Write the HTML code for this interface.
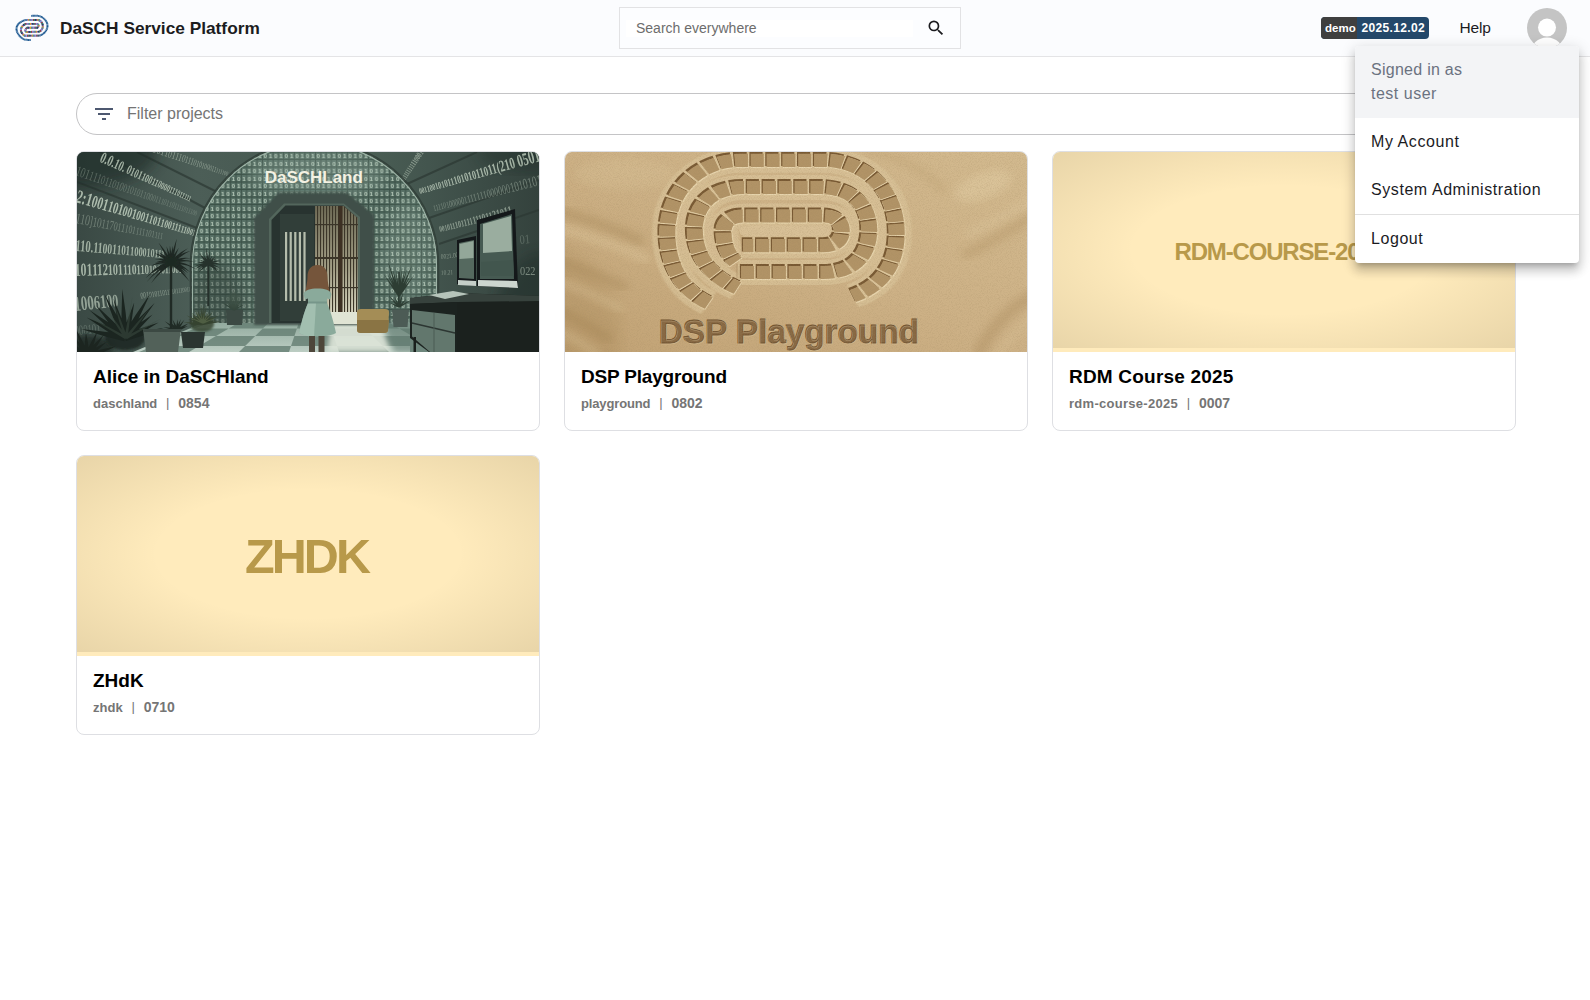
<!DOCTYPE html>
<html lang="en">
<head>
<meta charset="utf-8">
<title>DaSCH Service Platform</title>
<style>
*{box-sizing:border-box;margin:0;padding:0}
html,body{width:1590px;height:1000px;overflow:hidden;background:#fff;font-family:"Liberation Sans",sans-serif;color:#1b1b1f}
.abs{position:absolute}
#hdr{position:absolute;left:0;top:0;width:1590px;height:57px;background:#fbfcfe;border-bottom:1px solid #e4e4e6}
#title{position:absolute;left:60px;top:16.500px;font-size:17.3px;line-height:22px;font-weight:bold;color:#1c1c1e;white-space:nowrap;letter-spacing:0}
#search{position:absolute;left:619px;top:7px;width:342px;height:42px;border:1px solid #e2e2e4;background:#fcfdff}
#search .inp{position:absolute;left:6px;top:12px;width:287px;height:17px;background:#fff}
#search .ph{position:absolute;left:16px;top:12px;font-size:14px;line-height:17px;color:#6d6d6d;white-space:nowrap}
#badge{position:absolute;left:1321px;top:17px;width:108px;height:22px;border-radius:4px;overflow:hidden;background:#24486a;color:#fff;font-weight:bold;font-size:12px;line-height:22px;white-space:nowrap}
#badge .d{position:absolute;left:0;top:0;width:36px;height:22px;background:#3f3f3f;padding-left:4px;font-size:11.500px}
#badge .v{position:absolute;left:36px;top:0;width:72px;height:22px;padding-left:4.600px;letter-spacing:.33px}
#help{position:absolute;left:1459.500px;top:16.500px;font-size:15.500px;letter-spacing:-.15px;line-height:22px;color:#1b1b1f;white-space:nowrap}
#avatar{position:absolute;left:1527px;top:8px;width:40px;height:40px;border-radius:50%;background:#c4c4c4;overflow:hidden}
#filter{position:absolute;left:76px;top:93px;width:1440px;height:42px;border:1px solid #c4c4c6;border-radius:21px;background:#fff}
#filter .ph{position:absolute;left:50px;top:10px;font-size:16px;line-height:20px;color:#747474;white-space:nowrap}
.card{position:absolute;width:464px;height:280px;border:1px solid #dedfe3;border-radius:8px;background:#fff;overflow:hidden}
.card .img{position:absolute;left:0;top:0;width:462px;height:200px;overflow:hidden}
.card .t{position:absolute;left:16px;top:212.500px;font-size:19px;line-height:24px;font-weight:bold;color:#000;white-space:nowrap}
.card .s{position:absolute;left:16px;top:243px;font-size:14px;line-height:16px;font-weight:bold;color:#757575;white-space:nowrap}
.card .s b{font-size:13px}
.card .s i{display:inline-block;width:21px;text-align:center;font-style:normal;font-weight:normal;font-size:13px;position:relative;top:-1px}
.ph-img{background:#ffebbc;}
.ph-img .vig{position:absolute;left:0;top:0;width:462px;height:196px;background:radial-gradient(ellipse farthest-corner at center,rgba(0,0,0,0) 46%,rgba(40,25,0,.105) 100%)}
.ph-img .lbl{position:absolute;left:0;top:0;width:462px;height:200px;text-align:center;font-weight:bold;color:#b8994a;white-space:nowrap}
#menu{position:absolute;left:1355px;top:46px;width:224px;height:217px;background:#fff;border-radius:4px;overflow:hidden;box-shadow:0 5px 5px -3px rgba(0,0,0,.2),0 8px 10px 1px rgba(0,0,0,.14),0 3px 14px 2px rgba(0,0,0,.12)}
#menu .hd{position:absolute;left:0;top:0;width:224px;height:72px;background:#f3f4f6;color:#6b7280;padding:12px 16px;font-size:16px;line-height:24px;letter-spacing:.5px}
#menu .it{position:absolute;left:0;width:224px;height:48px;padding:0 16px;font-size:16px;line-height:48px;color:#1b1b1f;letter-spacing:.57px;white-space:nowrap}
#menu .dv{position:absolute;left:0;top:168px;width:224px;height:1px;background:#e0e0e0}
</style>
</head>
<body>
<div id="hdr">
  <svg id="logo" class="abs" style="left:12px;top:10px" width="40" height="36" viewBox="0 0 40 36" fill="none" stroke-linecap="butt">
<g stroke="#1b5790" stroke-width="2" stroke-dasharray="1.1 .25">
<path d="M19.3,5.9 C24,5.5 28,5.6 30.5,7.5 C34,10 35.8,13.5 35.5,16.2 C35.2,19.5 33.5,22 31.5,23.5 C30,24.8 28.5,25.4 27.4,25.6"/>
<path d="M18.7,29.9 C15,30.1 12.500,29.800 10.500,28.500 C7,26 4.300,22 4.500,18.700 C4.700,15.500 6.500,13.500 9,11.900 C11,10.600 13,10 15.100,9.900"/>
</g>
<g stroke-width="1.9">
<defs><path id="lsp" d="M15.1,9.9 L26.600,10 C28.500,10.600 30,12.500 30.600,14.400 C31,16 30.800,17.500 30.300,18.700 C29.500,20.300 28.500,21.200 27.400,21.600 L14.400,22 C13.500,21.500 13.200,20.800 13.300,20.200 C13.600,19 14.300,18.300 15.100,17.800 L25.200,17.800 C26.200,17.300 26.600,16.500 26.600,15.500 C26.500,14.700 26,14.200 25.200,13.900 L13.700,13.900 C11.500,14.800 9.600,16.800 9,18.700 C8.600,20.200 9,21.500 9.700,22.700 C10.500,24 11.500,25 12.600,25.700 L27.400,25.600"/></defs>
<use href="#lsp" stroke="#7b5ea7"/>
<use href="#lsp" stroke="#f0a020" stroke-dasharray="1.15 8.05" stroke-dashoffset="-1.15"/>
<use href="#lsp" stroke="#35a585" stroke-dasharray="1.15 8.05" stroke-dashoffset="-2.30"/>
<use href="#lsp" stroke="#8a6cb5" stroke-dasharray="1.15 8.05" stroke-dashoffset="-3.45"/>
<use href="#lsp" stroke="#7fb0e0" stroke-dasharray="1.15 8.05" stroke-dashoffset="-4.60"/>
<use href="#lsp" stroke="#a83240" stroke-dasharray="1.15 8.05" stroke-dashoffset="-5.75"/>
<use href="#lsp" stroke="#2a8a6a" stroke-dasharray="1.15 8.05" stroke-dashoffset="-6.90"/>
<use href="#lsp" stroke="#1f3a55" stroke-dasharray="1.15 8.05" stroke-dashoffset="-8.05"/>
</g>
</svg>
  <div id="title">DaSCH Service Platform</div>
  <div id="search"><div class="inp"></div><div class="ph">Search everywhere</div>
    <svg class="abs" style="left:306px;top:10px" width="20" height="20" viewBox="0 0 24 24"><path fill="#1b1b1f" d="M15.5 14h-.79l-.28-.27A6.471 6.471 0 0 0 16 9.5 6.5 6.5 0 1 0 9.500 16c1.610 0 3.090-.590 4.230-1.570l.27.280v.790l5 4.990L20.490 19l-4.990-5zm-6 0C7.010 14 5 11.990 5 9.500S7.010 5 9.500 5 14 7.010 14 9.500 11.990 14 9.500 14z"/></svg>
  </div>
  <div id="badge"><div class="d">demo</div><div class="v">2025.12.02</div></div>
  <div id="help">Help</div>
  <div id="avatar"><svg width="40" height="40" viewBox="0 0 40 40"><circle cx="20" cy="19.600" r="9" fill="#fff"/><ellipse cx="20" cy="45.200" rx="16.500" ry="15.700" fill="#fff"/></svg></div>
</div>

<div id="filter">
  <svg class="abs" style="left:15px;top:8px" width="24" height="24" viewBox="0 0 24 24"><path fill="#4d5870" d="M10 18h4v-2h-4v2zM3 6v2h18V6H3zm3 7h12v-2H6v2z"/></svg>
  <div class="ph">Filter projects</div>
</div>

<div class="card" style="left:76px;top:151px">
  <div class="img" id="img1"><svg width="462" height="200" viewBox="0 0 462 200" style="display:block" font-family="'Liberation Serif',serif">
<defs>
<linearGradient id="lw" x1="0" y1="0" x2="1" y2="0"><stop offset="0" stop-color="#3a4944"/><stop offset=".5" stop-color="#4c5e57"/><stop offset="1" stop-color="#465850"/></linearGradient>
<linearGradient id="rw" x1="0" y1="0" x2="1" y2="0"><stop offset="0" stop-color="#50655a"/><stop offset=".5" stop-color="#43554e"/><stop offset="1" stop-color="#34423d"/></linearGradient>
<linearGradient id="fl" x1="0" y1="0" x2="0" y2="1"><stop offset="0" stop-color="#93ab9f"/><stop offset="1" stop-color="#bccdc3"/></linearGradient>
<linearGradient id="win" x1="0" y1="0" x2="0" y2="1"><stop offset="0" stop-color="#6f6b56"/><stop offset=".6" stop-color="#a5a188"/><stop offset="1" stop-color="#d8d6c0"/></linearGradient>
<pattern id="grid" width="10.600" height="15" patternUnits="userSpaceOnUse"><rect width="10.600" height="15" fill="#3d5349"/><g fill="#597267"><rect x=".5" y=".6" width="4.300" height="6.300"/><rect x="5.800" y=".6" width="4.300" height="6.300"/><rect x=".5" y="8.100" width="4.300" height="6.300"/><rect x="5.800" y="8.100" width="4.300" height="6.300"/></g><g fill="#b3c6b6" font-family="'Liberation Sans',sans-serif" font-weight="bold" font-size="6.200" text-anchor="middle"><text x="2.650" y="6">1</text><text x="7.950" y="6">0</text><text x="2.650" y="13.500">0</text><text x="7.950" y="13.500">1</text></g></pattern>
<pattern id="bars" width="3" height="10" patternUnits="userSpaceOnUse"><rect x="0" y="0" width="1.100" height="10" fill="#3b3528"/></pattern>
<filter id="b1"><feGaussianBlur stdDeviation="1"/></filter>
<filter id="b2"><feGaussianBlur stdDeviation="2.500"/></filter>
<filter id="b6"><feGaussianBlur stdDeviation="7"/></filter>
<clipPath id="endc"><path d="M114,200 L114,113 A123.500,123.500 0 0 1 361,113 L361,200 Z"/></clipPath>
</defs>
<rect width="462" height="200" fill="#3a4944"/>
<rect x="0" y="0" width="240" height="200" fill="url(#lw)"/>
<rect x="240" y="0" width="222" height="200" fill="url(#rw)"/>
<path d="M0,30 L120,76" stroke="#2c3833" stroke-width="2" opacity=".7"/>
<path d="M60,0 L140,40" stroke="#2c3833" stroke-width="2" opacity=".7"/>
<path d="M0,-12 L128,56" stroke="#2c3833" stroke-width="2" opacity=".7"/>
<path d="M352,66 L462,28" stroke="#2c3833" stroke-width="2" opacity=".7"/>
<path d="M362,92 L462,58" stroke="#2c3833" stroke-width="2" opacity=".7"/>
<path d="M330,32 L400,0" stroke="#2c3833" stroke-width="2" opacity=".7"/>
<ellipse cx="0" cy="0" rx="80" ry="36" fill="#1f2925" opacity=".6" filter="url(#b6)"/>
<ellipse cx="470" cy="160" rx="50" ry="60" fill="#1f2925" opacity=".45" filter="url(#b6)"/>
<ellipse cx="462" cy="0" rx="60" ry="20" fill="#1f2925" opacity=".35" filter="url(#b6)"/>
<text fill="#b9c8b8" font-weight="normal" opacity="0.6" transform="translate(75 0) rotate(17.7) scale(0.64 1)"><tspan font-size="12.9">101</tspan><tspan font-size="11.8">101</tspan><tspan font-size="10.8">110</tspan><tspan font-size="9.9">111</tspan><tspan font-size="9.1">010</tspan><tspan font-size="8.3">100</tspan><tspan font-size="7.7">011</tspan><tspan font-size="7.0">111</tspan><tspan font-size="6.4">100</tspan></text>
<text fill="#b9c8b8" font-weight="bold" opacity="0.85" transform="translate(22 9.5) rotate(23.7) scale(0.64 1)"><tspan font-size="15.9">0.0</tspan><tspan font-size="14.7">.10</tspan><tspan font-size="13.6">. 0</tspan><tspan font-size="12.6">101</tspan><tspan font-size="11.7">100</tspan><tspan font-size="10.8">110</tspan><tspan font-size="10.0">000</tspan><tspan font-size="9.3">111</tspan><tspan font-size="8.6">011</tspan><tspan font-size="8.0">111</tspan></text>
<text fill="#b9c8b8" font-weight="normal" opacity="0.33" transform="translate(-2 23) rotate(18.6) scale(0.64 1)"><tspan font-size="14.4">101</tspan><tspan font-size="13.6">111</tspan><tspan font-size="12.8">011</tspan><tspan font-size="12.1">010</tspan><tspan font-size="11.4">010</tspan><tspan font-size="10.8">101</tspan><tspan font-size="10.2">100</tspan><tspan font-size="9.6">011</tspan><tspan font-size="9.0">101</tspan><tspan font-size="8.5">101</tspan><tspan font-size="8.0">111</tspan><tspan font-size="7.6">011</tspan><tspan font-size="7.2">100</tspan></text>
<text fill="#b9c8b8" font-weight="bold" opacity="0.9" transform="translate(-2 50) rotate(15.9) scale(0.64 1)"><tspan font-size="18.9">2:1</tspan><tspan font-size="17.5">001</tspan><tspan font-size="16.2">101</tspan><tspan font-size="14.9">001</tspan><tspan font-size="13.8">001</tspan><tspan font-size="12.7">101</tspan><tspan font-size="11.8">100</tspan><tspan font-size="10.9">111</tspan><tspan font-size="10.0">110</tspan><tspan font-size="9.3">011</tspan></text>
<text fill="#b9c8b8" font-weight="normal" opacity="0.4" transform="translate(-2 71) rotate(10.5) scale(0.64 1)"><tspan font-size="15.2">110</tspan><tspan font-size="14.1">]10</tspan><tspan font-size="13.2">117</tspan><tspan font-size="12.3">011</tspan><tspan font-size="11.5">101</tspan><tspan font-size="10.7">111</tspan><tspan font-size="10.0">101</tspan><tspan font-size="9.4">111</tspan></text>
<text fill="#b9c8b8" font-weight="bold" opacity="0.8" transform="translate(-2 99) rotate(4.5) scale(0.64 1)"><tspan font-size="16.7">110</tspan><tspan font-size="15.7">.11</tspan><tspan font-size="14.8">001</tspan><tspan font-size="13.9">101</tspan><tspan font-size="13.1">100</tspan><tspan font-size="12.4">010</tspan><tspan font-size="11.7">111</tspan></text>
<text fill="#b9c8b8" font-weight="bold" opacity="0.85" transform="translate(-2 124) rotate(-1.7) scale(0.64 1)"><tspan font-size="18.2">101</tspan><tspan font-size="16.9">112</tspan><tspan font-size="15.7">101</tspan><tspan font-size="14.6">110</tspan><tspan font-size="13.5">110</tspan><tspan font-size="12.6">101</tspan><tspan font-size="11.7">011</tspan><tspan font-size="10.8">001</tspan></text>
<text fill="#b9c8b8" font-weight="bold" opacity="0.7" transform="translate(-2 159) rotate(-6.0) scale(0.64 1)"><tspan font-size="20.5">100</tspan><tspan font-size="19.3">610</tspan><tspan font-size="18.2">0</tspan></text>
<text fill="#b9c8b8" font-weight="normal" opacity="0.6" transform="translate(64 147) rotate(-9.3) scale(0.64 1)"><tspan font-size="9.1">001</tspan><tspan font-size="8.6">010</tspan><tspan font-size="8.1">110</tspan><tspan font-size="7.6">111</tspan><tspan font-size="7.1">101</tspan><tspan font-size="6.7">110</tspan><tspan font-size="6.3">011</tspan></text>
<text fill="#b9c8b8" font-weight="normal" opacity="0.28" transform="translate(-2 183) rotate(-4.8) scale(0.64 1)"><tspan font-size="13.6">000</tspan><tspan font-size="13.6">101</tspan></text>
<text fill="#b9c8b8" font-weight="bold" opacity="0.85" transform="translate(343 42) rotate(-15.3) scale(0.64 1)"><tspan font-size="8.3">001</tspan><tspan font-size="9.1">100</tspan><tspan font-size="9.8">101</tspan><tspan font-size="10.7">011</tspan><tspan font-size="11.6">101</tspan><tspan font-size="12.6">010</tspan><tspan font-size="13.7">110</tspan><tspan font-size="14.9">11(</tspan><tspan font-size="16.2">210</tspan><tspan font-size="17.7"> 05</tspan><tspan font-size="19.2">01</tspan></text>
<text fill="#b9c8b8" font-weight="normal" opacity="0.45" transform="translate(357 59) rotate(-13.7) scale(0.64 1)"><tspan font-size="8.3">111</tspan><tspan font-size="8.9">101</tspan><tspan font-size="9.5">000</tspan><tspan font-size="10.1">001</tspan><tspan font-size="10.8">111</tspan><tspan font-size="11.5">111</tspan><tspan font-size="12.2">000</tspan><tspan font-size="13.0">000</tspan><tspan font-size="13.9">101</tspan><tspan font-size="14.8">010</tspan><tspan font-size="15.8">111</tspan></text>
<text fill="#b9c8b8" font-weight="bold" opacity="0.62" transform="translate(363 80) rotate(-13.4) scale(0.64 1)"><tspan font-size="8.3">001</tspan><tspan font-size="8.9">011</tspan><tspan font-size="9.5">101</tspan><tspan font-size="10.2">111</tspan><tspan font-size="10.9">111</tspan><tspan font-size="11.7">011</tspan><tspan font-size="12.5">210</tspan><tspan font-size="13.4">11</tspan></text>
<text fill="#b9c8b8" font-weight="bold" opacity="0.62" transform="translate(327 30) rotate(-55.8) scale(0.64 1)"><tspan font-size="6.8">111</tspan><tspan font-size="7.3">111</tspan><tspan font-size="7.7">111</tspan><tspan font-size="8.2">110</tspan><tspan font-size="8.8">001</tspan></text>
<text fill="#b9c8b8" font-weight="normal" opacity="0.55" transform="translate(443 123) rotate(0.0) scale(0.8 1)"><tspan font-size="12.9">022</tspan></text>
<text fill="#b9c8b8" font-weight="normal" opacity="0.28" transform="translate(443 92) rotate(-5.7) scale(0.8 1)"><tspan font-size="12.9">01</tspan></text>
<text fill="#b9c8b8" font-weight="normal" opacity="0.55" transform="translate(364 107) rotate(-6.3) scale(0.8 1)"><tspan font-size="6.8">002</tspan><tspan font-size="6.8">1.0</tspan><tspan font-size="6.8">0</tspan></text>
<text fill="#b9c8b8" font-weight="normal" opacity="0.5" transform="translate(364 123) rotate(-3.2) scale(0.8 1)"><tspan font-size="6.8">10.</tspan><tspan font-size="6.8">21</tspan></text>
<g clip-path="url(#endc)"><rect x="100" y="-12" width="270" height="212" fill="url(#grid)"/>
<ellipse cx="140" cy="160" rx="30" ry="50" fill="#2d3b36" opacity=".4" filter="url(#b6)"/>
<ellipse cx="240" cy="22" rx="70" ry="22" fill="#a9c0b3" opacity=".25" filter="url(#b6)"/>
<ellipse cx="330" cy="100" rx="26" ry="50" fill="#a9c0b3" opacity=".18" filter="url(#b6)"/>
</g>
<path d="M114,172 L114,113 A123.500,123.500 0 0 1 361,113 L361,150" fill="none" stroke="#2f3d37" stroke-width="2.600" opacity=".8"/>
<path d="M115.500,172 L115.500,113 A122,122 0 0 1 359.500,113 L359.500,150" fill="none" stroke="#9db3a6" stroke-width="1.100"/>
<path d="M56,200 L126,171 L340,171 L340,200 Z" fill="url(#fl)"/>
<clipPath id="flc"><path d="M56,200 L126,171 L340,171 L340,200 Z"/></clipPath><g clip-path="url(#flc)">
<path d="M100.2,171 L130.6,171 L117.6,176.5 L83.5,176.5 Z" fill="#647d72" opacity=".8"/>
<path d="M161.0,171 L191.4,171 L185.8,176.5 L151.7,176.5 Z" fill="#647d72" opacity=".8"/>
<path d="M221.8,171 L252.2,171 L254.1,176.5 L219.9,176.5 Z" fill="#647d72" opacity=".8"/>
<path d="M282.6,171 L313.0,171 L322.3,176.5 L288.2,176.5 Z" fill="#647d72" opacity=".8"/>
<path d="M343.4,171 L373.8,171 L390.5,176.5 L356.4,176.5 Z" fill="#647d72" opacity=".8"/>
<path d="M49.3,176.5 L83.5,176.5 L60.6,184 L21.5,184 Z" fill="#647d72" opacity=".8"/>
<path d="M117.6,176.5 L151.7,176.5 L139.0,184 L99.8,184 Z" fill="#647d72" opacity=".8"/>
<path d="M185.8,176.5 L219.9,176.5 L217.4,184 L178.2,184 Z" fill="#647d72" opacity=".8"/>
<path d="M254.1,176.5 L288.2,176.5 L295.8,184 L256.6,184 Z" fill="#647d72" opacity=".8"/>
<path d="M322.3,176.5 L356.4,176.5 L374.2,184 L335.0,184 Z" fill="#647d72" opacity=".8"/>
<path d="M60.6,184 L99.8,184 L76.2,194 L30.2,194 Z" fill="#647d72" opacity=".8"/>
<path d="M139.0,184 L178.2,184 L168.1,194 L122.1,194 Z" fill="#647d72" opacity=".8"/>
<path d="M217.4,184 L256.6,184 L260.0,194 L214.0,194 Z" fill="#647d72" opacity=".8"/>
<path d="M295.8,184 L335.0,184 L351.9,194 L305.9,194 Z" fill="#647d72" opacity=".8"/>
<path d="M374.2,184 L413.4,184 L443.8,194 L397.8,194 Z" fill="#647d72" opacity=".8"/>
<path d="M-15.7,194 L30.2,194 L-12.3,208 L-67.7,208 Z" fill="#647d72" opacity=".8"/>
<path d="M76.2,194 L122.1,194 L98.5,208 L43.1,208 Z" fill="#647d72" opacity=".8"/>
<path d="M168.1,194 L214.0,194 L209.3,208 L153.9,208 Z" fill="#647d72" opacity=".8"/>
<path d="M260.0,194 L305.9,194 L320.1,208 L264.7,208 Z" fill="#647d72" opacity=".8"/>
<path d="M351.9,194 L397.8,194 L430.9,208 L375.5,208 Z" fill="#647d72" opacity=".8"/>
</g>
<path d="M256,162 L300,163 L314,200 L250,200 Z" fill="#dfe6da" opacity=".9" filter="url(#b2)"/>
<path d="M306,168 L342,168 L342,200 L318,200 Z" fill="#5f786e" opacity=".55" filter="url(#b2)"/>
<path d="M178,172 L178,66 L202,41.500 L269,41.500 L296,63 L296,172 Z" fill="#3f5048" stroke="#3f5048" stroke-width="2" stroke-linejoin="round" filter="url(#b1)"/><path d="M192,171 L192,67 L207,51.500 L267,51.500 L283,65 L283,171 Z" fill="#53665c"/>
<path d="M194.500,171 L194.500,68 L208.500,53.500 L266.500,53.500 L280.700,66 L280.700,171 Z" fill="#283330"/>
<rect x="203" y="62" width="34" height="107" fill="#313e39"/>
<rect x="208.0" y="80" width="2.200" height="69" fill="#b5bdac"/>
<rect x="212.6" y="80" width="2.200" height="69" fill="#b5bdac"/>
<rect x="217.2" y="80" width="2.200" height="69" fill="#b5bdac"/>
<rect x="221.8" y="80" width="2.200" height="69" fill="#b5bdac"/>
<rect x="226.4" y="80" width="2.200" height="69" fill="#b5bdac"/>
<path d="M238,54 L266.500,54 L280.700,66 L280.700,162 L238,162 Z" fill="url(#win)"/>
<path d="M238,54 L266.500,54 L280.700,66 L280.700,162 L238,162 Z" fill="url(#bars)"/>
<rect x="238" y="105" width="43" height="2" fill="#3b3528"/><rect x="238" y="72" width="43" height="1.200" fill="#3b3528"/><rect x="238" y="135" width="43" height="1.200" fill="#3b3528"/><rect x="261.500" y="54" width="4" height="108" fill="#3d3023"/>
<rect x="238" y="160" width="43" height="12" fill="#e0e4d4"/>
<text x="236.800" y="31.300" font-family="'Liberation Sans',sans-serif" font-weight="bold" font-size="17.300" text-anchor="middle" fill="#f3f1e2" textLength="98" lengthAdjust="spacingAndGlyphs">DaSCHLand</text>
<path d="M280,160 Q280,157 284,157 L308,157 Q312,157 312,160 L311,178 Q311,181 307,181 L284,181 Q280,181 280,178 Z" fill="#a48d56"/>
<path d="M280,168 L312,168 L311,178 Q311,181 307,181 L284,181 Q280,181 280,178 Z" fill="#8a7444"/>
<rect x="321.300" y="120" width="1.400" height="34" fill="#2b3a31"/>
<path d="M322.9,143.4 Q315.2,132.7 307.0,122.5 Q313.8,133.7 321.1,144.6 Z M323.0,143.5 Q316.9,132.5 310.2,121.7 Q315.3,133.3 321.0,144.5 Z M323.0,143.6 Q317.6,131.6 311.6,119.9 Q316.0,132.3 321.0,144.4 Z M323.0,143.7 Q317.1,125.9 310.5,108.3 Q315.4,126.4 321.0,144.3 Z M323.1,143.8 Q319.7,130.2 315.7,116.7 Q318.0,130.6 320.9,144.2 Z M323.1,143.9 Q321.3,130.8 318.9,117.9 Q319.6,131.1 320.9,144.1 Z M323.1,144.0 Q323.3,131.1 322.8,118.1 Q321.5,131.0 320.9,144.0 Z M323.1,144.1 Q324.4,130.4 325.0,116.6 Q322.6,130.2 320.9,143.9 Z M323.1,144.2 Q325.9,130.5 328.1,116.6 Q324.2,130.1 320.9,143.8 Z M323.1,144.3 Q326.8,130.9 329.8,117.3 Q325.1,130.4 320.9,143.7 Z M323.0,144.4 Q329.5,128.6 335.4,112.5 Q327.9,127.9 321.0,143.6 Z M323.0,144.5 Q328.5,134.2 333.5,123.5 Q327.0,133.3 321.0,143.5 Z M322.9,144.6 Q330.1,134.2 336.8,123.4 Q328.7,133.2 321.1,143.4 Z" fill="#2d3d33" opacity="1"/>
<path d="M322.4,154.2 Q317.3,152.1 312.1,150.5 Q316.7,153.4 321.6,155.8 Z M322.7,154.4 Q317.4,148.7 311.8,143.4 Q316.4,149.7 321.3,155.6 Z M322.8,154.6 Q320.4,149.7 317.5,145.1 Q319.1,150.3 321.2,155.4 Z M322.9,154.9 Q322.3,146.9 321.1,139.0 Q320.8,147.0 321.1,155.1 Z M322.9,155.2 Q324.9,147.5 326.3,139.7 Q323.5,147.1 321.1,154.8 Z M322.7,155.6 Q326.2,151.4 329.4,146.7 Q325.2,150.4 321.3,154.4 Z M322.4,155.8 Q328.3,152.3 333.8,148.3 Q327.6,151.0 321.6,154.2 Z" fill="#2d3d33" opacity="1"/>
<path d="M315,157.500 L332,157.500 L330.500,175 L316.500,175 Z" fill="#4c5b55"/>
<path d="M240.500,113 C233,113 230.500,119 230.500,125 C230.500,130 229,135 228.500,140 L252.500,140 C252,135 250.500,130 250.500,125 C250.500,119 248,113 240.500,113 Z" fill="#75553b"/>
<path d="M226.500,142 C228,138 233,136.500 240.500,136.500 C248,136.500 253,138 254.500,142 L253,147.500 L250,146.500 L250,151 C254,160 257,172 259,181 C252,185.500 229,185.500 222,181 C224,172 227,160 231,151 L231,146.500 L228,147.500 Z" fill="#8aaa9b"/>
<path d="M231,151 C227,160 224,172 222,181 C226,183.500 232,184.500 237,184.800 L239,151 Z" fill="#a9c6b7" opacity=".75"/>
<rect x="231" y="149.500" width="19" height="2" fill="#76968a"/>
<rect x="232" y="184" width="6" height="16" fill="#4d463a"/><rect x="241.500" y="184" width="6" height="16" fill="#4d463a"/>
<path d="M333,146 L380,141 L462,144 L462,200 L333,200 Z" fill="#1b211e"/>
<path d="M333,146 L380,141 L462,144 L462,149 L380,150 L333,152 Z" fill="#37423d"/>
<path d="M333,152 L380,150 L380,200 L333,200 Z" fill="#1c2320"/>
<path d="M333,186 L352,200 L333,200 Z" fill="#6d867c"/>
<path d="M335,158 L378,163 L378,200 L353,200 L335,184.500 Z" fill="#62776d"/>
<path d="M335,171 L378,181" stroke="#2c3632" stroke-width="1.300"/><path d="M357,161 L357,200" stroke="#4a5d54" stroke-width="1"/>
<rect x="336.500" y="185" width="2.500" height="15" fill="#1a201d"/>
<path d="M352,143 L376,139 L392,142 L368,147 Z" fill="#b6c4ba"/>
<path d="M380,88 L399,84 L399,134 L380,132 Z" fill="#14181a"/>
<path d="M382,91 L397,88 L397,127 L382,126 Z" fill="#55695f"/>
<path d="M382.500,92 L396.500,89 L396.500,106 L382.500,107 Z" fill="#93a799"/>
<path d="M381,128 L399,129 L399,134 L381,133 Z" fill="#c5cfc8"/>
<path d="M400,68 L438,57 L441,136 L400,134 Z" fill="#14181a"/>
<path d="M403,72 L435,62 L437,127 L403,127 Z" fill="#465a52"/>
<path d="M406,72 L434,64 L435,99 L406,101 Z" fill="#9aad9f"/>
<path d="M404,110 L436,108 L437,124 L404,124 Z" fill="#42564e"/>
<path d="M401,128 L440,129 L441,136 L401,134 Z" fill="#cdd6cf"/>
<ellipse cx="10" cy="196" rx="26" ry="12" fill="#1d2621" opacity=".75" filter="url(#b2)"/>
<path d="M10.7,201.6 Q-2.5,198.0 -16.2,195.9 Q-3.7,201.8 9.3,206.4 Z M11.5,202.0 Q-0.1,194.1 -12.6,187.5 Q-2.5,197.3 8.5,206.0 Z M12.1,202.6 Q5.4,193.5 -2.6,185.1 Q2.1,195.7 7.9,205.4 Z M12.3,203.0 Q6.0,189.2 -1.7,176.0 Q2.3,190.7 7.7,205.0 Z M12.5,203.9 Q11.5,191.8 8.9,179.7 Q7.5,191.9 7.5,204.1 Z M12.3,205.0 Q17.0,192.5 20.3,179.4 Q13.3,190.9 7.7,203.0 Z M12.0,205.6 Q19.9,194.8 26.7,183.1 Q16.8,192.3 8.0,202.4 Z M11.5,206.0 Q20.7,198.7 29.0,190.2 Q18.3,195.5 8.5,202.0 Z M10.8,206.4 Q25.2,201.0 39.1,194.2 Q23.9,197.2 9.2,201.6 Z" fill="#1c2520" opacity="1"/>
<rect x="92.800" y="112" width="2.400" height="66" fill="#202a25"/>
<path d="M93.2,109.8 Q83.4,116.9 74.0,131.2 Q84.6,118.7 94.8,112.2 Z M93.5,109.7 Q81.4,114.9 69.6,130.0 Q82.2,117.0 94.5,112.3 Z M93.7,109.6 Q81.0,112.6 68.4,126.3 Q81.4,114.7 94.3,112.4 Z M93.9,109.6 Q83.4,110.9 73.0,121.4 Q83.6,113.1 94.1,112.4 Z M94.3,109.6 Q82.9,107.6 71.3,115.3 Q82.4,109.8 93.7,112.4 Z M94.5,109.7 Q86.4,106.7 78.0,110.5 Q85.6,108.8 93.5,112.3 Z M94.7,109.8 Q86.5,105.3 77.8,107.3 Q85.3,107.3 93.3,112.2 Z M94.9,109.9 Q86.4,102.8 77.3,101.3 Q84.9,104.5 93.1,112.1 Z M95.1,110.1 Q88.8,103.3 81.9,100.4 Q87.1,104.8 92.9,111.9 Z M95.2,110.3 Q88.7,99.0 81.5,90.5 Q86.8,100.1 92.8,111.7 Z M95.4,110.6 Q92.9,102.1 89.5,94.3 Q90.7,102.7 92.6,111.4 Z M95.4,110.9 Q94.6,102.2 92.9,93.5 Q92.3,102.3 92.6,111.1 Z M95.4,111.2 Q96.1,102.5 95.9,93.8 Q93.8,102.2 92.6,110.8 Z M95.4,111.3 Q98.0,98.8 99.8,86.6 Q95.8,98.3 92.6,110.7 Z M95.3,111.6 Q98.9,103.2 101.8,95.7 Q96.9,102.2 92.7,110.4 Z M95.1,111.9 Q103.3,102.1 110.9,96.2 Q101.6,100.6 92.9,110.1 Z M94.9,112.0 Q104.6,102.9 113.6,98.8 Q103.0,101.2 93.1,110.0 Z M94.7,112.2 Q104.7,106.1 114.3,106.3 Q103.6,104.2 93.3,109.8 Z M94.5,112.3 Q106.7,107.3 118.6,110.6 Q105.9,105.2 93.5,109.7 Z M94.2,112.4 Q107.4,110.4 120.4,118.1 Q107.1,108.2 93.8,109.6 Z M93.9,112.4 Q103.5,112.9 113.2,120.3 Q103.7,110.7 94.1,109.6 Z M93.7,112.4 Q102.5,114.0 111.4,121.6 Q102.9,111.8 94.3,109.6 Z M93.5,112.3 Q101.3,115.1 109.5,123.0 Q102.2,113.1 94.5,109.7 Z M93.2,112.2 Q102.8,118.2 112.8,129.8 Q104.0,116.3 94.8,109.8 Z" fill="#1f2924" opacity="1"/>
<ellipse cx="94" cy="110" rx="7" ry="6" fill="#1f2924" opacity=".85" filter="url(#b1)"/>
<rect x="130.300" y="112" width="1.700" height="42" fill="#26312c"/>
<path d="M130.5,111.1 Q125.9,114.2 121.6,120.6 Q126.7,115.6 131.5,112.9 Z M130.7,111.0 Q125.7,112.6 120.8,118.1 Q126.1,114.1 131.3,113.0 Z M131.0,111.0 Q124.7,111.4 118.4,116.7 Q124.7,113.0 131.0,113.0 Z M131.1,111.0 Q124.4,110.2 117.6,114.6 Q124.2,111.8 130.9,113.0 Z M131.4,111.1 Q125.3,108.8 119.0,110.9 Q124.7,110.2 130.6,112.9 Z M131.6,111.2 Q127.2,108.2 122.5,108.0 Q126.3,109.4 130.4,112.8 Z M131.8,111.4 Q127.0,105.1 121.7,101.1 Q125.7,106.1 130.2,112.6 Z M131.9,111.6 Q129.3,106.4 126.2,102.2 Q127.9,107.1 130.1,112.4 Z M132.0,111.9 Q130.9,103.6 129.3,95.5 Q129.3,103.8 130.0,112.1 Z M132.0,112.1 Q132.7,105.8 132.7,99.4 Q131.1,105.6 130.0,111.9 Z M131.9,112.4 Q133.9,107.7 135.4,103.3 Q132.5,107.0 130.1,111.6 Z M131.8,112.6 Q135.4,107.8 138.5,104.2 Q134.1,106.8 130.2,111.4 Z M131.7,112.7 Q135.5,108.8 138.8,106.5 Q134.4,107.7 130.3,111.3 Z M131.5,112.9 Q138.3,109.0 144.9,108.9 Q137.6,107.6 130.5,111.1 Z M131.3,113.0 Q138.0,110.9 144.6,112.9 Q137.6,109.4 130.7,111.0 Z M130.9,113.0 Q137.3,113.1 143.6,117.0 Q137.3,111.5 131.1,111.0 Z M130.7,113.0 Q135.8,114.2 141.0,118.3 Q136.2,112.7 131.3,111.0 Z M130.6,112.9 Q135.8,115.2 141.3,120.3 Q136.5,113.8 131.4,111.1 Z" fill="#26322c" opacity="1"/>
<ellipse cx="48" cy="186" rx="20" ry="12" fill="#1c2621" opacity=".85" filter="url(#b1)"/>
<path d="M48.7,182.8 Q26.5,178.9 4.0,176.9 Q25.5,184.0 47.3,189.2 Z M49.5,183.1 Q30.1,173.4 9.7,165.4 Q27.6,178.0 46.5,188.9 Z M50.0,183.4 Q31.7,170.0 12.3,158.0 Q28.5,174.1 46.0,188.6 Z M50.4,183.8 Q35.3,167.7 18.7,152.9 Q31.4,171.2 45.6,188.2 Z M50.9,184.6 Q40.1,162.8 27.4,141.9 Q35.4,165.0 45.1,187.4 Z M51.1,185.1 Q44.8,165.7 36.6,146.8 Q39.8,167.1 44.9,186.9 Z M51.2,185.8 Q49.2,161.4 45.3,137.1 Q44.0,161.7 44.8,186.2 Z M51.1,186.8 Q55.1,168.9 57.2,150.5 Q50.1,167.6 44.9,185.2 Z M50.8,187.6 Q63.0,165.0 73.5,141.3 Q58.5,162.4 45.2,184.4 Z M50.5,188.1 Q64.8,170.2 77.6,151.0 Q60.8,166.8 45.5,183.9 Z M50.1,188.5 Q63.4,176.2 75.5,162.4 Q60.0,172.2 45.9,183.5 Z M49.4,189.0 Q65.9,180.6 81.6,170.5 Q63.7,175.9 46.6,183.0 Z M48.8,189.1 Q68.0,183.6 86.6,176.1 Q66.7,178.5 47.2,182.9 Z" fill="#1b2520" opacity="1"/>
<path d="M49.7,184.7 Q32.6,175.3 14.9,166.6 Q31.4,177.4 48.3,187.3 Z M50.2,185.2 Q41.1,172.0 31.3,159.4 Q39.1,173.3 47.8,186.8 Z M50.4,185.5 Q44.4,168.9 37.5,152.7 Q42.1,169.7 47.6,186.5 Z M50.5,186.2 Q53.3,165.8 55.3,145.1 Q51.0,165.4 47.5,185.8 Z M50.2,186.9 Q62.0,171.8 73.0,156.0 Q60.1,170.3 47.8,185.1 Z M49.7,187.3 Q66.7,177.5 83.3,166.9 Q65.6,175.4 48.3,184.7 Z" fill="#3a4a40" opacity="0.55"/>
<path d="M100.3,176.8 Q93.3,175.6 86.2,175.0 Q92.9,177.4 99.7,179.2 Z M100.7,177.0 Q94.4,172.8 87.8,169.2 Q93.3,174.4 99.3,179.0 Z M100.9,177.2 Q97.0,173.1 92.5,169.4 Q95.5,174.3 99.1,178.8 Z M101.1,177.5 Q98.7,172.4 95.6,167.5 Q96.9,173.1 98.9,178.5 Z M101.2,178.1 Q101.2,172.7 100.5,167.2 Q99.3,172.6 98.8,177.9 Z M101.1,178.4 Q102.8,173.0 103.7,167.3 Q100.9,172.4 98.9,177.6 Z M101.0,178.7 Q104.4,173.4 107.3,167.7 Q102.8,172.3 99.0,177.3 Z M100.6,179.0 Q106.4,175.4 111.8,171.2 Q105.4,173.8 99.4,177.0 Z M100.4,179.1 Q105.8,176.9 110.9,173.9 Q105.1,175.1 99.6,176.9 Z" fill="#202b25" opacity="1"/>
<path d="M125.1,170.7 Q115.8,170.1 106.4,170.3 Q115.6,172.2 124.9,173.3 Z M125.4,170.8 Q118.3,168.5 110.8,167.0 Q117.6,170.5 124.6,173.2 Z M125.6,170.9 Q117.7,166.7 109.4,163.2 Q116.7,168.5 124.4,173.1 Z M125.8,171.0 Q120.4,166.8 114.5,163.1 Q119.1,168.4 124.2,173.0 Z M126.0,171.1 Q120.4,165.5 114.3,160.5 Q118.9,167.0 124.0,172.9 Z M126.2,171.4 Q122.6,164.9 118.4,158.8 Q120.8,165.9 123.8,172.6 Z M126.2,171.6 Q123.8,164.4 120.6,157.4 Q121.8,165.0 123.8,172.4 Z M126.3,171.9 Q125.5,162.1 123.9,152.4 Q123.4,162.3 123.7,172.1 Z M126.3,172.1 Q126.9,162.1 126.7,152.1 Q124.8,162.0 123.7,171.9 Z M126.3,172.3 Q128.3,163.2 129.5,153.9 Q126.3,162.7 123.7,171.7 Z M126.1,172.7 Q129.5,166.5 132.2,159.9 Q127.7,165.4 123.9,171.3 Z M126.0,172.9 Q131.3,166.3 136.1,159.2 Q129.8,164.9 124.0,171.1 Z M125.8,173.1 Q131.5,168.6 136.7,163.5 Q130.3,166.9 124.2,170.9 Z M125.6,173.2 Q134.0,168.5 142.0,163.2 Q133.0,166.7 124.4,170.8 Z M125.3,173.3 Q132.6,171.0 139.6,168.0 Q132.0,169.0 124.7,170.7 Z M125.2,173.3 Q134.8,171.7 144.4,169.3 Q134.6,169.6 124.8,170.7 Z" fill="#3a4836" opacity="1"/>
<ellipse cx="125" cy="172" rx="12" ry="8" fill="#35432f" opacity=".8" filter="url(#b1)"/>
<path d="M126.3,170.3 Q119.0,167.5 111.6,165.2 Q118.6,168.6 125.7,171.7 Z M126.5,170.4 Q121.2,166.2 115.6,162.2 Q120.4,167.1 125.5,171.6 Z M126.6,170.6 Q122.1,163.4 117.2,156.5 Q121.1,164.1 125.4,171.4 Z M126.7,170.8 Q125.4,165.5 123.6,160.2 Q124.2,165.7 125.3,171.2 Z M126.7,171.1 Q127.3,165.2 127.5,159.3 Q126.1,165.1 125.3,170.9 Z M126.7,171.4 Q129.3,166.0 131.6,160.5 Q128.3,165.5 125.3,170.6 Z M126.5,171.5 Q130.8,167.1 134.7,162.4 Q129.9,166.3 125.5,170.5 Z M126.3,171.7 Q132.7,168.9 138.9,165.7 Q132.2,167.8 125.7,170.3 Z" fill="#5b6a4c" opacity="0.7"/>
<path d="M66,177 L104,177 L101,200 L69,200 Z" fill="#526159"/>
<path d="M66,177 L104,177 L103.600,180 L66.400,180 Z" fill="#3c4943"/>
<path d="M104,180 L128,180 L126,196 L106,196 Z" fill="#2b3531"/>
<path d="M149,158 L166,158 L165,173 L150,173 Z" fill="#3c4a44"/>
<path d="M157.5,157.2 Q151.2,153.4 144.7,150.0 Q150.5,154.6 156.5,158.8 Z M157.6,157.4 Q154.1,154.1 150.3,151.3 Q153.1,155.2 156.4,158.6 Z M157.7,157.5 Q154.2,152.9 150.3,148.6 Q153.1,153.7 156.3,158.5 Z M157.8,157.6 Q155.7,153.2 153.1,149.0 Q154.4,153.8 156.2,158.4 Z M157.9,157.8 Q156.3,152.2 154.1,146.7 Q154.9,152.5 156.1,158.2 Z M157.9,158.0 Q157.5,152.1 156.6,146.3 Q156.1,152.2 156.1,158.0 Z M157.9,158.1 Q158.4,153.4 158.4,148.6 Q157.0,153.2 156.1,157.9 Z M157.8,158.4 Q160.1,153.1 162.0,147.6 Q158.8,152.5 156.2,157.6 Z M157.7,158.5 Q161.5,153.0 164.9,147.2 Q160.4,152.2 156.3,157.5 Z M157.6,158.7 Q160.9,155.3 163.8,151.6 Q159.9,154.3 156.4,157.3 Z M157.4,158.8 Q162.9,155.7 168.1,152.1 Q162.2,154.4 156.6,157.2 Z" fill="#35463c" opacity="1"/>
<ellipse cx="157" cy="148" rx="7" ry="8" fill="#3f5247" opacity=".5" filter="url(#b1)"/>
</svg></div>
  <div class="t" style="letter-spacing:-.04px">Alice in DaSCHland</div>
  <div class="s"><b>daschland</b><i>|</i>0854</div>
</div>
<div class="card" style="left:564px;top:151px">
  <div class="img" id="img2"><svg width="462" height="200" viewBox="0 0 462 200" style="display:block">
<defs>
<linearGradient id="sg" x1="0" y1="1" x2="1" y2="0"><stop offset="0" stop-color="#c1a274"/><stop offset=".5" stop-color="#cdb186"/><stop offset="1" stop-color="#d3ba8f"/></linearGradient>
<filter id="sb4"><feGaussianBlur stdDeviation="4"/></filter>
<filter id="sb8"><feGaussianBlur stdDeviation="8"/></filter>
<filter id="sb1"><feGaussianBlur stdDeviation=".7"/></filter>
<filter id="grain" x="0" y="0" width="100%" height="100%"><feTurbulence type="fractalNoise" baseFrequency="1.1" numOctaves="2" seed="3" result="n"/><feColorMatrix type="matrix" values="0 0 0 0 0.35  0 0 0 0 0.25  0 0 0 0 0.12  0 0 0 0.9 -0.38"/></filter>
<path id="pO" d="M-60,151 C-85,137 -94,108 -94,81 C-94,38 -68,8.300 -34,8.300 L34,8.300 C68,8.300 94,38 94,81 C94,112 82,134 58,144"/>
<path id="p2" d="M-36.500,136 C-52,128 -71.500,110 -71.500,78 C-71.5,52 -56,35.5 -32,35.5 L32,35.5 C56,35.5 71.5,52 71.5,78 C71.5,104 58,120.5 34,120.5 L-36,120.5"/>
<path id="p3" d="M-38,110 C-45,102 -48,92 -48,79 C-48,70 -42,64 -32,64 L34,64 C44,64 49,70 49,79 C49,88 44,93.7 34,93.7 L-32,93.7"/>
</defs>
<rect width="462" height="200" fill="url(#sg)"/>
<path d="M-20,90 C30,100 70,150 50,220 L-20,220 Z" fill="#a68657" opacity=".3" filter="url(#sb8)"/>
<path d="M-10,58 C20,66 45,74 78,90" stroke="#a98a5c" stroke-width="9" fill="none" opacity="0.5" filter="url(#sb4)"/>
<path d="M-10,75 C20,83 50,93 84,108" stroke="#e0c99f" stroke-width="8" fill="none" opacity="0.55" filter="url(#sb4)"/>
<path d="M-10,108 C15,116 35,124 62,136" stroke="#a98a5c" stroke-width="9" fill="none" opacity="0.5" filter="url(#sb4)"/>
<path d="M-10,128 C15,136 35,146 58,158" stroke="#dcc59a" stroke-width="7" fill="none" opacity="0.5" filter="url(#sb4)"/>
<path d="M-10,157 C10,165 25,175 46,188" stroke="#a58657" stroke-width="9" fill="none" opacity="0.5" filter="url(#sb4)"/>
<path d="M-10,178 C5,184 20,192 34,204" stroke="#dcc59a" stroke-width="7" fill="none" opacity="0.45" filter="url(#sb4)"/>
<path d="M398,104 C420,94 445,78 472,62" stroke="#b39466" stroke-width="9" fill="none" opacity="0.45" filter="url(#sb4)"/>
<path d="M400,84 C420,76 445,60 472,46" stroke="#dfc9a0" stroke-width="8" fill="none" opacity="0.4" filter="url(#sb4)"/>
<path d="M412,204 C428,172 450,152 472,142" stroke="#ad8e60" stroke-width="12" fill="none" opacity="0.45" filter="url(#sb4)"/>
<path d="M430,208 C444,186 458,172 472,166" stroke="#dcc59a" stroke-width="7" fill="none" opacity="0.4" filter="url(#sb4)"/>
<path d="M300,-4 C340,6 360,20 380,40" stroke="#b89a6c" stroke-width="8" fill="none" opacity="0.3" filter="url(#sb4)"/>
<ellipse cx="418" cy="34" rx="30" ry="13" fill="#e2cda4" opacity=".5" filter="url(#sb4)" transform="rotate(-20 418 34)"/>
<ellipse cx="60" cy="22" rx="50" ry="16" fill="#d9c297" opacity=".35" filter="url(#sb4)"/>
<g transform="translate(217 0) scale(1.22 1)" fill="none">
<g stroke="#dac49a" stroke-width="25" opacity=".7" filter="url(#sb1)"><use href="#pO"/><use href="#p2"/><use href="#p3"/></g>
<use href="#pO" stroke="#d9c297" stroke-width="16.500"/>
<use href="#pO" stroke="#785933" stroke-width="14.200" stroke-dasharray="10.800 2.200" stroke-dashoffset="0" transform="translate(-1 -1.400)"/>
<use href="#pO" stroke="#e8d5ae" stroke-width="13.800" stroke-dasharray="10.800 2.200" stroke-dashoffset="0" transform="translate(.5 .7)"/>
<use href="#pO" stroke="#b19366" stroke-width="13.200" stroke-dasharray="10.800 2.200" stroke-dashoffset="0"/>
<use href="#p2" stroke="#d9c297" stroke-width="16.500"/>
<use href="#p2" stroke="#785933" stroke-width="14.200" stroke-dasharray="10.800 2.200" stroke-dashoffset="3" transform="translate(-1 -1.400)"/>
<use href="#p2" stroke="#e8d5ae" stroke-width="13.800" stroke-dasharray="10.800 2.200" stroke-dashoffset="3" transform="translate(.5 .7)"/>
<use href="#p2" stroke="#b19366" stroke-width="13.200" stroke-dasharray="10.800 2.200" stroke-dashoffset="3"/>
<use href="#p3" stroke="#d9c297" stroke-width="16.500"/>
<use href="#p3" stroke="#785933" stroke-width="14.200" stroke-dasharray="10.800 2.200" stroke-dashoffset="5" transform="translate(-1 -1.400)"/>
<use href="#p3" stroke="#e8d5ae" stroke-width="13.800" stroke-dasharray="10.800 2.200" stroke-dashoffset="5" transform="translate(.5 .7)"/>
<use href="#p3" stroke="#b19366" stroke-width="13.200" stroke-dasharray="10.800 2.200" stroke-dashoffset="5"/>
<path d="M-30,79 L34,79" stroke="#d8c097" stroke-width="10" stroke-linecap="round"/>
</g>
<text x="223.800" y="191" font-family="'Liberation Sans',sans-serif" font-weight="bold" font-size="33.500" text-anchor="middle" fill="#876843" stroke="#6f5230" stroke-width=".8" textLength="260" lengthAdjust="spacingAndGlyphs">DSP Playground</text>
<text x="224.400" y="191.800" font-family="'Liberation Sans',sans-serif" font-weight="bold" font-size="33.500" text-anchor="middle" fill="none" stroke="#e6d3ab" stroke-width=".5" opacity=".45" textLength="260" lengthAdjust="spacingAndGlyphs">DSP Playground</text>
<rect width="462" height="200" filter="url(#grain)" opacity=".6"/>
</svg></div>
  <div class="t" style="letter-spacing:-.19px">DSP Playground</div>
  <div class="s"><b style="letter-spacing:-.14px">playground</b><i>|</i>0802</div>
</div>
<div class="card" style="left:1052px;top:151px">
  <div class="img ph-img"><div class="vig"></div><div class="lbl" style="font-size:24px;line-height:200px;letter-spacing:-1.170px;text-align:left;padding-left:121.500px">RDM-COURSE-2025</div></div>
  <div class="t" style="letter-spacing:.2px">RDM Course 2025</div>
  <div class="s"><b style="letter-spacing:.28px">rdm-course-2025</b><i>|</i>0007</div>
</div>
<div class="card" style="left:76px;top:455px">
  <div class="img ph-img"><div class="vig"></div><div class="lbl" style="font-size:48.500px;line-height:200px;letter-spacing:-2.900px;text-indent:-2.900px">ZHDK</div></div>
  <div class="t">ZHdK</div>
  <div class="s"><b>zhdk</b><i>|</i>0710</div>
</div>

<div id="menu">
  <div class="hd"><span style="letter-spacing:.27px">Signed in as</span><br>test user</div>
  <div class="it" style="top:72px">My Account</div>
  <div class="it" style="top:120px">System Administration</div>
  <div class="dv"></div>
  <div class="it" style="top:169px">Logout</div>
</div>
</body>
</html>
